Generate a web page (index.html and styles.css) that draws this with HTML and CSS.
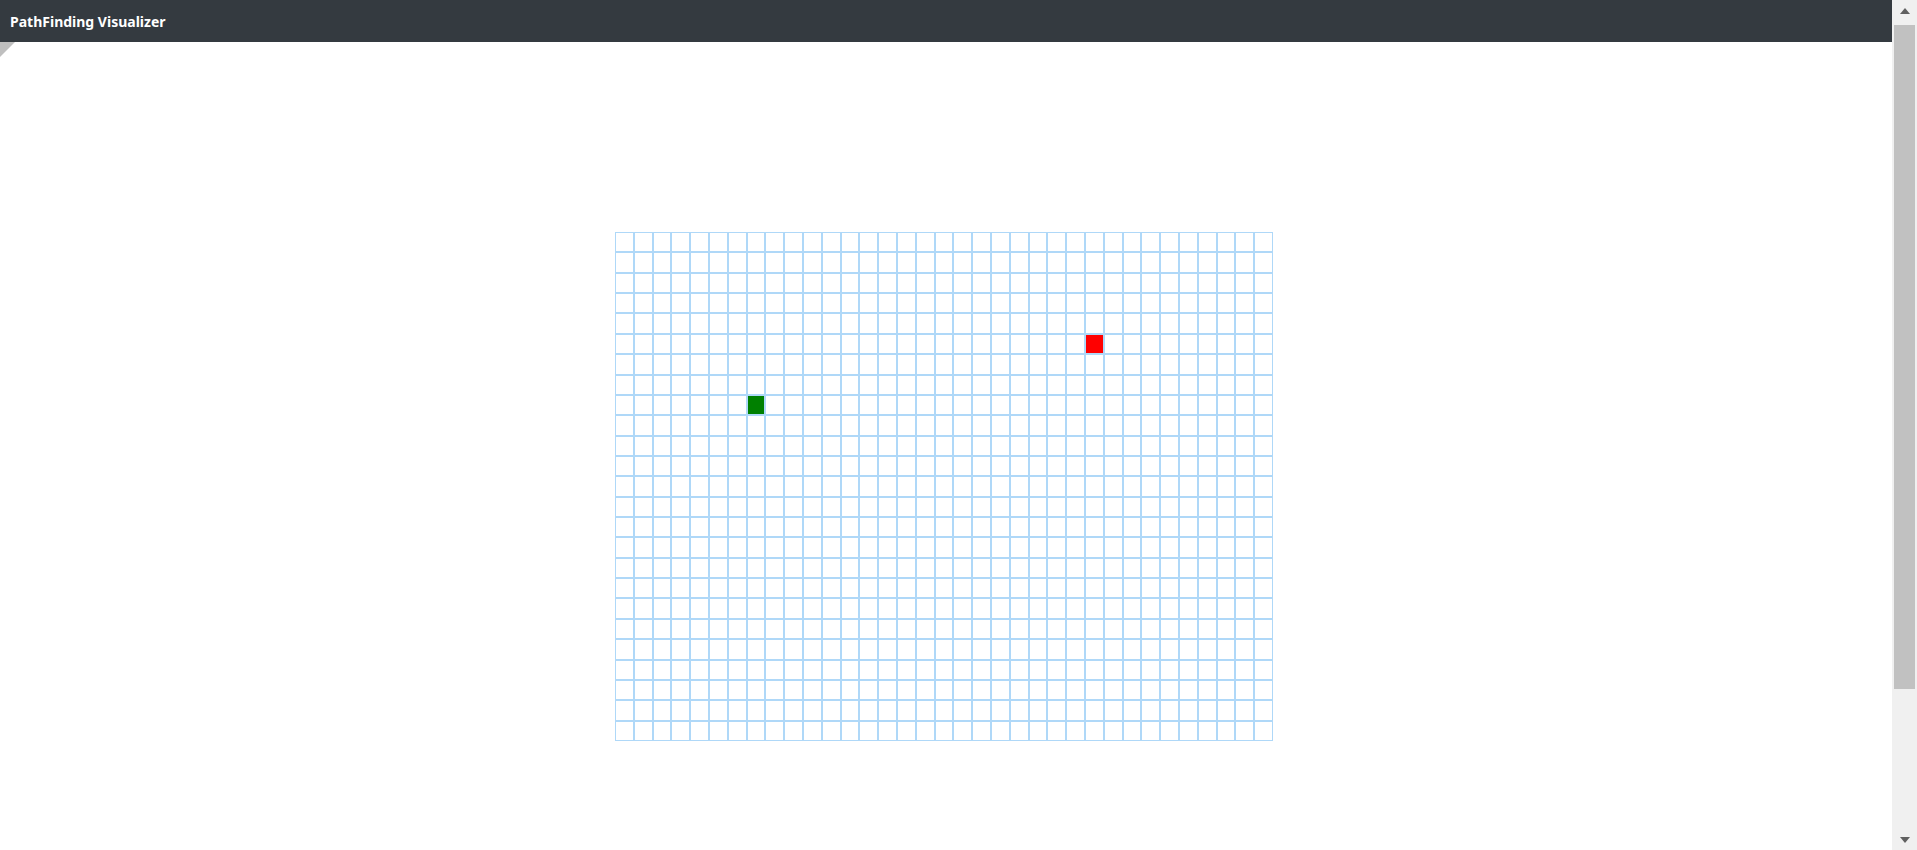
FILE: index.html
```html
<!DOCTYPE html>
<html lang="en">
<head>
<meta charset="utf-8">
<title>PathFinding Visualizer</title>
<link rel="stylesheet" href="styles.css">
</head>
<body>
<nav class="navbar">
  <span class="brand">PathFinding Visualizer</span>
</nav>
<div class="corner"></div>
<main class="stage">
  <div class="grid" id="grid"></div>
</main>
<div class="scrollbar" aria-hidden="true">
  <div class="sb-btn"><span class="arrow-up"></span></div>
  <div class="sb-track"><div class="sb-thumb"></div></div>
  <div class="sb-btn"><span class="arrow-down"></span></div>
</div>
<script src="script.js"></script>
</body>
</html>
```
FILE: styles.css
```css
html, body {
  margin: 0;
  padding: 0;
  background: #ffffff;
  overflow: hidden;
}
body {
  font-family: "Noto Sans", "Open Sans", sans-serif;
  position: relative;
  height: 850px;
}
.navbar {
  height: 42px;
  background: #343a40;
  display: flex;
  align-items: center;
  padding-left: 10px;
  margin-right: 25px;
}
.brand {
  color: #ffffff;
  font-weight: 700;
  font-size: 14px;
}
.corner {
  position: absolute;
  top: 42px;
  left: 0;
  width: 0;
  height: 0;
  border-top: 15px solid #bfbfbf;
  border-right: 15px solid transparent;
}
.stage {
  display: flex;
  justify-content: center;
  padding: 190px 29px 0 0;
}
.grid {
  width: 658px;
  height: 509px;
  display: grid;
  grid-template-columns: repeat(35, 1fr);
  grid-template-rows: repeat(25, 1fr);
}
.node {
  box-sizing: border-box;
  border: 1px solid rgb(175, 216, 248);
}
.node-start {
  background: #008000;
}
.node-finish {
  background: #ff0000;
}
.scrollbar {
  position: fixed;
  top: 0;
  right: 0;
  width: 25px;
  height: 850px;
  background: #f0f0f0;
  display: flex;
  flex-direction: column;
}
.sb-btn {
  height: 21px;
  display: flex;
  align-items: center;
  justify-content: center;
}
.arrow-up {
  width: 0;
  height: 0;
  border-left: 5.5px solid transparent;
  border-right: 5.5px solid transparent;
  border-bottom: 6px solid #606060;
}
.arrow-down {
  width: 0;
  height: 0;
  border-left: 5.5px solid transparent;
  border-right: 5.5px solid transparent;
  border-top: 6px solid #606060;
}
.sb-track {
  flex: 1;
  padding: 4px 2px 0 2px;
}
.sb-thumb {
  height: 664px;
  background: #c1c1c1;
}
```
FILE: script.js
```js
(function () {
  var grid = document.getElementById('grid');
  var rows = 25, cols = 35;
  var frag = document.createDocumentFragment();
  for (var r = 0; r < rows; r++) {
    for (var c = 0; c < cols; c++) {
      var d = document.createElement('div');
      d.className = 'node';
      if (r === 8 && c === 7) d.className += ' node-start';
      if (r === 5 && c === 25) d.className += ' node-finish';
      frag.appendChild(d);
    }
  }
  grid.appendChild(frag);
})();
```
